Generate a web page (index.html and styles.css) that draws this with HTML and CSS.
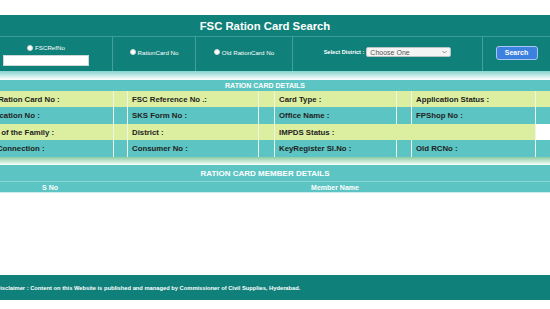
FILE: index.html
```html
<!DOCTYPE html>
<html lang="en">
<head>
  <meta charset="UTF-8" />
  <title>FSC Ration Card Search</title>
  <link rel="stylesheet" href="styles.css">
</head>
<body>
  <div class="page">
    <div class="title-bar">FSC Ration Card Search</div>

    <div class="search-row">
      <div class="search-cell first">
        <label class="radio-label"><span class="radio"></span>FSCRefNo</label>
        <input type="text" class="ref-input" />
      </div>
      <div class="search-cell">
        <label class="radio-label"><span class="radio"></span>RationCard No</label>
      </div>
      <div class="search-cell">
        <label class="radio-label"><span class="radio"></span>Old RationCard No</label>
      </div>
      <div class="search-cell">
        <span class="district-label">Select District :</span>
        <div class="district-select">
          <span>Choose One</span>
          <svg width="5" height="4" viewBox="0 0 5 4"><path d="M0.5 1 L2.5 3 L4.5 1" fill="none" stroke="#777" stroke-width="0.8"/></svg>
        </div>
      </div>
      <div class="search-cell">
        <button class="search-btn">Search</button>
      </div>
    </div>

    <div class="strip"></div>

    <div class="details-bar">RATION CARD DETAILS</div>

    <div class="detail-row yellow">
      <div class="cell first">New Ration Card No :</div>
      <div class="cell"></div>
      <div class="cell">FSC Reference No .:</div>
      <div class="cell"></div>
      <div class="cell">Card Type :</div>
      <div class="cell"></div>
      <div class="cell">Application Status :</div>
      <div class="cell"></div>
    </div>
    <div class="detail-row teal tall">
      <div class="cell first">Application No :</div>
      <div class="cell"></div>
      <div class="cell">SKS Form No :</div>
      <div class="cell"></div>
      <div class="cell">Office Name :</div>
      <div class="cell"></div>
      <div class="cell">FPShop No :</div>
      <div class="cell"></div>
    </div>
    <div class="detail-row yellow">
      <div class="cell first">Head of the Family :</div>
      <div class="cell"></div>
      <div class="cell">District :</div>
      <div class="cell"></div>
      <div class="cell span3">IMPDS Status :</div>
      <div class="cell blank"></div>
    </div>
    <div class="detail-row teal tall">
      <div class="cell first">Gas Connection :</div>
      <div class="cell"></div>
      <div class="cell">Consumer No :</div>
      <div class="cell"></div>
      <div class="cell">KeyRegister Sl.No :</div>
      <div class="cell"></div>
      <div class="cell">Old RCNo :</div>
      <div class="cell"></div>
    </div>

    <div class="strip green"></div>

    <div class="member-bar">RATION CARD MEMBER DETAILS</div>
    <div class="member-head">
      <div>S No</div>
      <div>Member Name</div>
    </div>

    <div class="spacer"></div>

    <div class="footer">Disclaimer : Content on this Website is published and managed by Commissioner of Civil Supplies, Hyderabad.</div>
  </div>
</body>
</html>
```

FILE: styles.css
```css
* {
  box-sizing: border-box;
  margin: 0;
  padding: 0;
}

body {
  font-family: 'Liberation Sans', Arial, sans-serif;
  color: #222;
  background: #fff;
  padding-top: 15px;
  overflow: hidden;
}

.page {
  width: 570px;
  margin-left: -20px;
}

.title-bar {
  height: 22px;
  background: #0f807a;
  border-bottom: 1px solid #3c9d97;
  color: #fff;
  font-size: 11.3px;
  font-weight: bold;
  display: flex;
  align-items: center;
  justify-content: center;
}

.search-row {
  display: grid;
  grid-template-columns: 132px 83px 97px 190px 68px;
  height: 34px;
  background: #0f807a;
}

.search-cell {
  display: flex;
  align-items: center;
  justify-content: center;
  gap: 2px;
  padding-bottom: 4px;
  border-left: 1px solid #43a09a;
  color: #fff;
  font-size: 6.2px;
}

.search-cell.first {
  flex-direction: column;
  gap: 4px;
  padding: 2px 0 0;
  border-left: none;
}

.radio-label {
  display: flex;
  align-items: center;
  gap: 2px;
}

.radio {
  width: 6px;
  height: 6px;
  border-radius: 50%;
  background: #fff;
  border: 1px solid #d8d8d8;
}

.ref-input {
  width: 86px;
  height: 11px;
  border: 1px solid #cfd8d8;
  background: #fff;
}

.district-label {
  font-weight: bold;
  font-size: 5.6px;
}

.district-select {
  width: 85px;
  height: 10px;
  background: #f4f4f4;
  border: 1px solid #b9c4c4;
  border-radius: 2px;
  padding: 0 3px;
  font-size: 7px;
  color: #555;
  display: flex;
  align-items: center;
  justify-content: space-between;
}

.search-btn {
  width: 42px;
  height: 14px;
  margin-top: 1px;
  background: #3c80e0;
  border: 1px solid #a9c8f0;
  border-radius: 3px;
  color: #fff;
  font-family: 'Liberation Sans', Arial, sans-serif;
  font-size: 7px;
  font-weight: bold;
}

.strip {
  height: 9px;
  background: linear-gradient(#86d3ce, #e4f6f5 75%, #fff);
}

.strip.green {
  height: 8px;
  background: linear-gradient(#8ccca4, #dcf1e6 75%, #fff);
}

.details-bar {
  height: 11px;
  background: #5cc4c3;
  color: #fff;
  font-size: 7px;
  font-weight: bold;
  display: flex;
  align-items: center;
  justify-content: center;
}

.detail-row {
  display: grid;
  grid-template-columns: 133px 14px 131px 16px 122px 15px 124px 15px;
  height: 16px;
}

.detail-row.tall {
  height: 17px;
}

.yellow {
  background: #dcee9f;
}

.teal {
  background: #5cc4c3;
}

.cell {
  display: flex;
  align-items: center;
  padding: 0 4px;
  border-left: 1px solid #eef5e6;
  font-size: 7.8px;
  font-weight: bold;
  white-space: nowrap;
}

.cell.first {
  padding-left: 0;
  border-left: none;
}

.cell.span3 {
  grid-column: span 3;
}

.cell.blank {
  background: #fff;
}

.member-bar {
  height: 16px;
  background: #5cc4c3;
  color: #fff;
  font-size: 8px;
  font-weight: bold;
  display: flex;
  align-items: center;
  justify-content: center;
}

.member-head {
  display: grid;
  grid-template-columns: 140px 1fr;
  height: 12px;
  background: #5cc4c3;
  border-top: 1px solid #8ad6d3;
  border-bottom: 1px solid #c9eeec;
  color: #fff;
  font-size: 7px;
  font-weight: bold;
  text-align: center;
  align-items: center;
}

.spacer {
  height: 82px;
}

.footer {
  height: 25px;
  background: #0f807a;
  color: #fff;
  font-size: 5.75px;
  font-weight: bold;
  padding-left: 16px;
  display: flex;
  align-items: center;
}
```
